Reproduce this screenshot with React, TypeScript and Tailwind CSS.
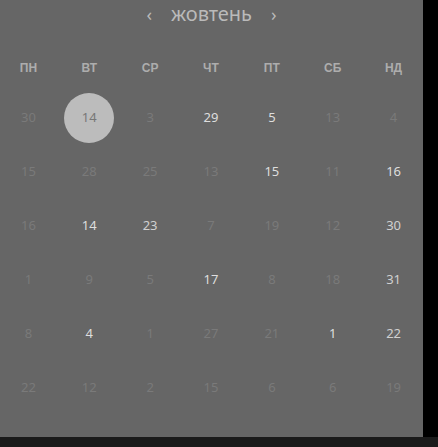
import React from 'react';

type Day = { n: number; tone: 'dim' | 'bright' | 'mid' | 'sel' };

const weekDays = ['ПН', 'ВТ', 'СР', 'ЧТ', 'ПТ', 'СБ', 'НД'];

const d = (n: number, tone: Day['tone'] = 'dim'): Day => ({ n, tone });

const rows: Day[][] = [
  [d(30), d(14, 'sel'), d(3), d(29, 'bright'), d(5, 'bright'), d(13), d(4)],
  [d(15), d(28), d(25), d(13), d(15, 'bright'), d(11), d(16, 'bright')],
  [d(16), d(14, 'bright'), d(23, 'mid'), d(7), d(19), d(12), d(30, 'mid')],
  [d(1), d(9), d(5), d(17, 'bright'), d(8), d(18), d(31, 'mid')],
  [d(8), d(4, 'bright'), d(1), d(27), d(21), d(1, 'bright'), d(22, 'mid')],
  [d(22), d(12), d(2), d(15), d(6), d(6), d(19)],
];

const toneClass: Record<Day['tone'], string> = {
  dim: 'text-[#7a7a7a]',
  bright: 'text-[#dedede]',
  mid: 'text-[#d0d0d0]',
  sel: 'text-[#777777]',
};

function App() {
  return (
    <div className="w-[438px] h-[447px] bg-black flex flex-col font-['Noto_Sans',sans-serif]">
      <div className="flex flex-1">
        <div className="w-[423px] h-[437px] bg-[#666666] flex flex-col overflow-hidden">
          {/* month switcher */}
          <div className="h-[27px] flex items-center justify-center gap-[19px] text-[#bababa]">
            <span className="text-[18px] leading-none">‹</span>
            <span className="text-[20px] leading-none">жовтень</span>
            <span className="text-[18px] leading-none">›</span>
          </div>

          <div className="grid grid-cols-7 w-[426px] -ml-[2px] h-[40px] mt-[21px] items-center text-center">
            {weekDays.map(w => (
              <span key={w} className="text-[12px] font-bold text-[#adadad] font-['Liberation_Sans',sans-serif]">
                {w}
              </span>
            ))}
          </div>

          <div className="mt-[3px] flex flex-col w-[426px] -ml-[2px]">
            {rows.map((row, i) => (
              <div key={i} className="grid grid-cols-7 h-[54px] items-center text-center">
                {row.map((day, j) => (
                  <div key={j} className="flex items-center justify-center">
                    {day.tone === 'sel' ? (
                      <span className="w-[50px] h-[50px] rounded-full bg-[#bcbcbc] flex items-center justify-center text-[13px] text-[#777777]">
                        {day.n}
                      </span>
                    ) : (
                      <span className={`text-[13px] ${toneClass[day.tone]}`}>{day.n}</span>
                    )}
                  </div>
                ))}
              </div>
            ))}
          </div>
        </div>
      </div>
      <div className="h-[10px] bg-[#1b1b1b]" />
    </div>
  );
}

export default App;
